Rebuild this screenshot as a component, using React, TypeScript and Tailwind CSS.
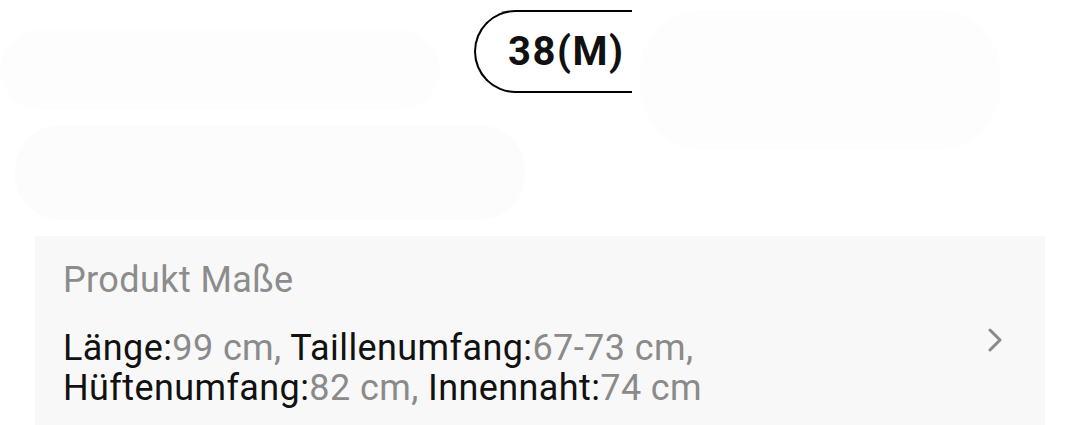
import React from "react";

export default function App() {
  return (
    <div className="relative w-[1077px] h-[425px] overflow-hidden bg-white" style={{ fontFamily: "Roboto, 'Noto Sans', sans-serif" }}>
      {/* faint erased smudges */}
      <div className="absolute left-[0px] top-[30px] w-[440px] h-[80px] rounded-[40px] bg-[#fdfdfd]" />
      <div className="absolute left-[15px] top-[125px] w-[510px] h-[95px] rounded-[45px] bg-[#fcfcfc]" />
      <div className="absolute left-[640px] top-[10px] w-[360px] h-[140px] rounded-[60px] bg-[#fdfdfd]" />

      <div className="relative h-[236px] pt-[10px] pl-[474px]">
        <div className="h-[83px] w-[158px] border-2 border-r-0 border-black rounded-l-[42px] flex items-center pl-[32px] text-[40px] tracking-[1.5px] font-bold text-[#111] leading-none">
          38(M)
        </div>
      </div>

      <div className="relative mx-[35px] w-[1010px] h-[189px] bg-[#f8f8f8] pl-[28px] pt-[24px] flex">
        <div className="flex-1">
          <div className="text-[36px] leading-[40px] tracking-[0.4px] text-[#8c8c8c]">Produkt Maße</div>
          <div className="mt-[28px] text-[36px] leading-[40px] tracking-[0.4px] text-[#111]">
            <div>
              Länge:<span className="text-[#8a8a8a]">99 cm, </span>Taillenumfang:<span className="text-[#8a8a8a]">67-73 cm,</span>
            </div>
            <div>
              Hüftenumfang:<span className="text-[#8a8a8a]">82 cm, </span>Innennaht:<span className="text-[#8a8a8a]">74 cm</span>
            </div>
          </div>
        </div>
        <div className="mt-[68px] mr-[42px] self-start">
          <svg width="16" height="24" viewBox="0 0 16 24" fill="none">
            <path d="M3 2 L13 12 L3 22" stroke="#8a8a8a" strokeWidth="3" strokeLinecap="round" strokeLinejoin="round" />
          </svg>
        </div>
      </div>
    </div>
  );
}
